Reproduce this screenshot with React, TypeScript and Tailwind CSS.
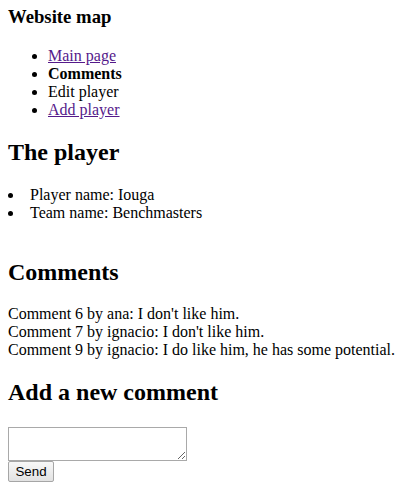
export default function App() {
  const comments = [
    { id: 6, author: 'ana', text: "I don't like him." },
    { id: 7, author: 'ignacio', text: "I don't like him." },
    { id: 9, author: 'ignacio', text: 'I do like him, he has some potential.' },
  ]

  return (
    <div className="bg-white px-2 pt-[6px] pb-2 text-[16px] leading-[normal] text-black font-['Liberation_Serif','Times_New_Roman',serif]">
      <h3 className="text-[18.72px] font-bold leading-[normal] mb-[18.72px]">Website map</h3>
      <ul className="list-disc pl-10 mb-[19.92px]">
        <li><a href="#" className="text-[#551a8b] underline">Main page</a></li>
        <li><b>Comments</b></li>
        <li>Edit player</li>
        <li><a href="#" className="text-[#551a8b] underline">Add player</a></li>
      </ul>

      <h2 className="text-2xl font-bold leading-[normal] mb-[19.92px]">The player</h2>
      <ul className="list-disc list-inside">
        <li>Player name: Iouga</li>
        <li>Team name: Benchmasters</li>
      </ul>
      <br />

      <h2 className="text-2xl font-bold leading-[normal] mt-[19.92px] mb-[19px]">Comments</h2>
      <div className="whitespace-nowrap">
        {comments.map(c => (
          <div key={c.id}>
            Comment {c.id} by {c.author}: {c.text}
          </div>
        ))}
      </div>

      <h2 className="text-2xl font-bold leading-[normal] mt-[19.92px] mb-[21px]">Add a new comment</h2>
      <form onSubmit={e => e.preventDefault()}>
        <textarea className="block w-[179px] h-[34px] border border-[#a9a9a9] p-[2px] resize font-['Liberation_Mono',monospace] text-[13.33px]" />
        <button
          type="submit"
          className="block h-[21px] w-[46px] rounded-[2px] border border-[#a6a6a6] bg-gradient-to-b from-[#f8f8f8] to-[#e2e2e2] text-[13.33px] leading-none font-['Liberation_Sans',Arial,sans-serif]"
        >
          Send
        </button>
      </form>
    </div>
  )
}
